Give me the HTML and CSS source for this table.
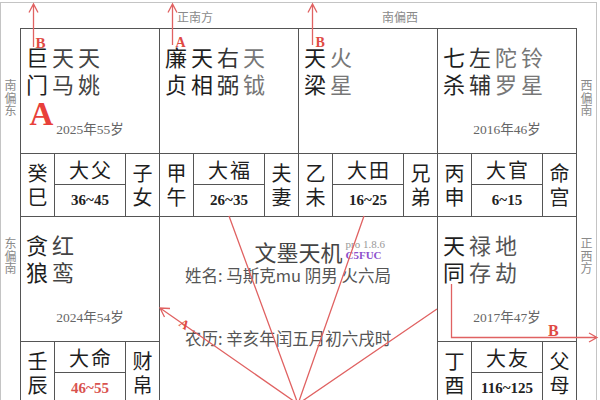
FILE: index.html
```html
<!DOCTYPE html>
<html lang="zh">
<head>
<meta charset="utf-8">
<title>文墨天机</title>
<link rel="stylesheet" href="styles.css">
</head>
<body>
<div class="board">
  <div class="top-band">
    <div></div>
    <div class="dir dir-left">正南方</div>
    <div class="dir dir-right">南偏西</div>
    <div></div>
  </div>

  <div class="side side-left">
    <div class="side-cell first"><div class="vdir"><span>南</span><span>偏</span><span>东</span></div></div>
    <div class="side-cell second"><div class="vdir"><span>东</span><span>偏</span><span>南</span></div></div>
  </div>

  <div class="chart">
    <!-- 巳 -->
    <div class="palace">
      <div class="main">
        <div class="stars">
          <div class="star major"><span>巨</span><span>门</span></div>
          <div class="star minor"><span>天</span><span>马</span></div>
          <div class="star minor"><span>天</span><span>姚</span></div>
        </div>
        <div class="year">2025年55岁</div>
      </div>
      <div class="foot">
        <div class="gan"><span>癸</span><span>巳</span></div>
        <div class="mid"><div class="hall">大父</div><div class="range">36~45</div></div>
        <div class="gong"><span>子</span><span>女</span></div>
      </div>
    </div>
    <!-- 午 -->
    <div class="palace">
      <div class="main">
        <div class="stars">
          <div class="star major"><span>廉</span><span>贞</span></div>
          <div class="star major"><span>天</span><span>相</span></div>
          <div class="star aux"><span>右</span><span>弼</span></div>
          <div class="star light"><span>天</span><span>钺</span></div>
        </div>
      </div>
      <div class="foot">
        <div class="gan"><span>甲</span><span>午</span></div>
        <div class="mid"><div class="hall">大福</div><div class="range">26~35</div></div>
        <div class="gong"><span>夫</span><span>妻</span></div>
      </div>
    </div>
    <!-- 未 -->
    <div class="palace">
      <div class="main">
        <div class="stars">
          <div class="star major"><span>天</span><span>梁</span></div>
          <div class="star light"><span>火</span><span>星</span></div>
        </div>
      </div>
      <div class="foot">
        <div class="gan"><span>乙</span><span>未</span></div>
        <div class="mid"><div class="hall">大田</div><div class="range">16~25</div></div>
        <div class="gong"><span>兄</span><span>弟</span></div>
      </div>
    </div>
    <!-- 申 -->
    <div class="palace">
      <div class="main">
        <div class="stars">
          <div class="star major"><span>七</span><span>杀</span></div>
          <div class="star aux"><span>左</span><span>辅</span></div>
          <div class="star light"><span>陀</span><span>罗</span></div>
          <div class="star light"><span>铃</span><span>星</span></div>
        </div>
        <div class="year">2016年46岁</div>
      </div>
      <div class="foot">
        <div class="gan"><span>丙</span><span>申</span></div>
        <div class="mid"><div class="hall">大官</div><div class="range">6~15</div></div>
        <div class="gong"><span>命</span><span>宫</span></div>
      </div>
    </div>

    <!-- 辰 -->
    <div class="palace">
      <div class="main">
        <div class="stars">
          <div class="star major"><span>贪</span><span>狼</span></div>
          <div class="star minor"><span>红</span><span>鸾</span></div>
        </div>
        <div class="year">2024年54岁</div>
      </div>
      <div class="foot">
        <div class="gan"><span>壬</span><span>辰</span></div>
        <div class="mid"><div class="hall">大命</div><div class="range current">46~55</div></div>
        <div class="gong"><span>财</span><span>帛</span></div>
      </div>
    </div>

    <div class="center">
      <div class="title-row">
        <div class="title">文墨天机<div class="tag"><span class="ver">pro 1.8.6</span><span class="code">C5FUC</span></div></div>
      </div>
      <div class="info name">姓名: 马斯克mu 阴男 火六局</div>
      <div class="info lunar">农历: 辛亥年闰五月初六戌时</div>
    </div>

    <!-- 酉 -->
    <div class="palace">
      <div class="main">
        <div class="stars">
          <div class="star major"><span>天</span><span>同</span></div>
          <div class="star mid-tone"><span>禄</span><span>存</span></div>
          <div class="star mid-tone"><span>地</span><span>劫</span></div>
        </div>
        <div class="year">2017年47岁</div>
      </div>
      <div class="foot">
        <div class="gan"><span>丁</span><span>酉</span></div>
        <div class="mid"><div class="hall">大友</div><div class="range">116~125</div></div>
        <div class="gong"><span>父</span><span>母</span></div>
      </div>
    </div>
  </div>

  <div class="side side-right">
    <div class="side-cell first"><div class="vdir"><span>西</span><span>偏</span><span>南</span></div></div>
    <div class="side-cell second"><div class="vdir"><span>正</span><span>西</span><span>方</span></div></div>
  </div>
</div>

<svg class="marks" width="600" height="400" viewBox="0 0 600 400">
  <g class="mark-lines">
    <path d="M33.5 47V4 M29 12.5L33.5 4L38 12.5"/>
    <path d="M172.5 45V4 M168 12.5L172.5 4L177 12.5"/>
    <path d="M312.5 45V4 M308 12.5L312.5 4L317 12.5"/>
    <path d="M451.5 284V337.5H597 M589 333L597 337.5L589 342"/>
    <path d="M298 404L229 216 M298 404L364 216 M298 404L437 309 M298 404L160 308 M164.5 317L160 308L170 308.5"/>
  </g>
  <g class="mark-text">
    <text x="35.5" y="47.5" font-size="15">B</text>
    <text x="175.5" y="47" font-size="14">A</text>
    <text x="315.5" y="47" font-size="14">B</text>
    <text x="548" y="336" font-size="16">B</text>
    <text x="29.5" y="125" font-size="33" class="big">A</text>
    <text x="178" y="325" font-size="13" transform="rotate(35 178 325)">A</text>
  </g>
</svg>
</body>
</html>
```

FILE: styles.css
```css
* { box-sizing: border-box; }

body {
  margin: 0;
  background: #fff;
  overflow: hidden;
  font-family: "Noto Sans CJK SC", "Noto Sans", sans-serif;
  color: #222;
}

.board {
  width: 597px;
  margin-top: 2px;
  border: 1px solid #c4c4c4;
  border-bottom: 0;
  display: grid;
  grid-template-columns: 19px 557px 1fr;
  grid-template-rows: 25px auto;
}

.top-band {
  grid-column: 2;
  grid-row: 1;
  display: grid;
  grid-template-columns: repeat(4, 139px);
}

.dir {
  font-size: 12px;
  line-height: 14px;
  color: #8a8a8a;
  padding-top: 7px;
}
.dir-left { padding-left: 18px; }
.dir-right { text-align: right; padding-right: 19px; }

.side {
  grid-row: 2;
  display: grid;
  grid-template-rows: 188px 188px;
}
.side-left { grid-column: 1; }
.side-right { grid-column: 3; }
.side-cell { display: flex; justify-content: center; }
.side-cell.first { padding-top: 51px; }
.side-cell.second { padding-top: 21px; }

.vdir {
  display: flex;
  flex-direction: column;
  font-size: 12px;
  line-height: 12.5px;
  color: #8a8a8a;
}

.chart {
  grid-column: 2;
  grid-row: 2;
  display: grid;
  grid-template-columns: repeat(4, 139px);
  grid-template-rows: 188px 188px 188px;
  border-left: 1px solid #555;
  border-top: 1px solid #555;
}

.palace {
  border-right: 1px solid #555;
  border-bottom: 1px solid #555;
  display: grid;
  grid-template-rows: 125px 1fr;
}

.main {
  border-bottom: 1px solid #555;
  display: flex;
  flex-direction: column;
  padding: 14px 5px 15px 5px;
}

.stars { display: flex; gap: 4px; }

.star {
  display: flex;
  flex-direction: column;
  width: 22px;
  font-size: 22px;
  line-height: 27px;
}
.star.major { color: #1e1e1e; }
.star.aux { color: #333; }
.star.minor { color: #444; }
.star.mid-tone { color: #555; }
.star.light { color: #777; }

.year {
  margin-top: auto;
  text-align: center;
  font-family: "Liberation Serif", "Noto Sans CJK SC", serif;
  font-size: 13.5px;
  line-height: 16px;
  color: #666;
}

.foot {
  display: grid;
  grid-template-columns: 34px 71px 1fr;
}

.gan, .gong {
  display: flex;
  flex-direction: column;
  align-items: center;
  justify-content: center;
  font-size: 20px;
  line-height: 24px;
  color: #1e1e1e;
}
.gan { border-right: 1px solid #555; }

.mid {
  border-right: 1px solid #555;
  display: grid;
  grid-template-rows: 31px 1fr;
}

.hall {
  border-bottom: 1px solid #555;
  display: flex;
  align-items: center;
  justify-content: center;
  font-size: 20px;
  letter-spacing: 2px;
  padding-left: 2px;
  color: #1e1e1e;
}

.range {
  display: flex;
  align-items: center;
  justify-content: center;
  font-family: "Liberation Serif", serif;
  font-weight: bold;
  font-size: 15px;
  color: #222;
}
.range.current { color: #d9534f; }

.center {
  grid-column: 2 / span 2;
  grid-row: 2 / span 2;
  border-right: 1px solid #555;
  border-bottom: 1px solid #555;
  padding-top: 19px;
}

.title-row { display: flex; justify-content: center; }

.title {
  position: relative;
  font-size: 22px;
  line-height: 30px;
  color: #444;
}

.tag {
  position: absolute;
  left: 100%;
  top: 3px;
  margin-left: 3px;
  display: flex;
  flex-direction: column;
  font-family: "Liberation Serif", serif;
  white-space: nowrap;
}
.tag .ver { font-size: 11px; line-height: 11px; color: #999; }
.tag .code { font-size: 11px; line-height: 11px; font-weight: bold; color: #8e4fcc; }

.info {
  padding-left: 25px;
  font-size: 16.5px;
  line-height: 20px;
  color: #555;
}
.name { margin-top: -1px; }
.lunar { margin-top: 43px; }

.marks {
  position: absolute;
  top: 0;
  left: 0;
  pointer-events: none;
}
.mark-lines path {
  fill: none;
  stroke: #e06262;
  stroke-width: 1.3;
}
.mark-text text {
  fill: #e04a44;
  font-family: "Liberation Serif", serif;
  font-weight: bold;
}
.mark-text .big { fill: #e8403a; }
```
